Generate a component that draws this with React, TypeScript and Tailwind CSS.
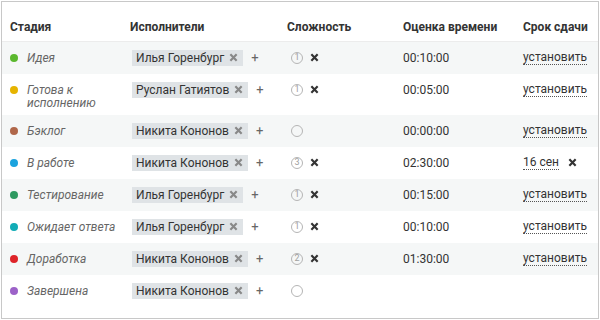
import React from "react";

type Task = {
  stage: string;
  color: string;
  who: string;
  level: number | null;
  time: string;
  due: string | null;
};

const tasks: Task[] = [
  { stage: "Идея", color: "bg-[#5bb82e]", who: "Илья Горенбург", level: 1, time: "00:10:00", due: null },
  { stage: "Готова к исполнению", color: "bg-[#e6b400]", who: "Руслан Гатиятов", level: 1, time: "00:05:00", due: null },
  { stage: "Бэклог", color: "bg-[#b0674a]", who: "Никита Кононов", level: null, time: "00:00:00", due: null },
  { stage: "В работе", color: "bg-[#1ba3de]", who: "Никита Кононов", level: 3, time: "02:30:00", due: "16 сен" },
  { stage: "Тестирование", color: "bg-[#2e9a61]", who: "Илья Горенбург", level: 1, time: "00:15:00", due: null },
  { stage: "Ожидает ответа", color: "bg-[#12acb6]", who: "Илья Горенбург", level: 1, time: "00:10:00", due: null },
  { stage: "Доработка", color: "bg-[#de2429]", who: "Никита Кононов", level: 2, time: "01:30:00", due: null },
  { stage: "Завершена", color: "bg-[#9c62c8]", who: "Никита Кононов", level: null, time: "", due: "" },
];

function Cross({ size = 9, width = 2.2, className = "" }: { size?: number; width?: number; className?: string }) {
  return (
    <svg width={size} height={size} viewBox="0 0 10 10" className={className}>
      <path d="M1.5 1.5 L8.5 8.5 M8.5 1.5 L1.5 8.5" stroke="currentColor" strokeWidth={width} fill="none" />
    </svg>
  );
}

function Level({ level }: { level: number | null }) {
  return (
    <div className="flex h-4 items-center gap-[7px]">
      <span className="ml-[4px] flex h-[12px] w-[12px] items-center justify-center rounded-full border border-[#b5b5b5] text-[9px] leading-none text-[#a0a0a0]">
        {level ?? ""}
      </span>
      {level !== null && <Cross size={9} width={2.4} className="text-[#333]" />}
    </div>
  );
}

function Due({ due }: { due: string | null }) {
  if (due === "") return null;
  return (
    <div className="flex h-4 items-center gap-[9px]">
      <span className="border-b border-dotted border-[#555] leading-[14px] text-[#333]">
        {due ?? "установить"}
      </span>
      {due && <Cross size={9} width={2.4} className="text-[#333]" />}
    </div>
  );
}

export default function App() {
  return (
    <div className="p-px" style={{ fontFamily: "Roboto, 'Liberation Sans', sans-serif" }}>
      <div className="h-[318px] w-[598px] border border-[#c8c8c8] bg-white">
        <table className="w-full table-fixed border-collapse text-[12px] text-[#333]">
          <colgroup>
            <col className="w-[120px]" />
            <col className="w-[157px]" />
            <col className="w-[116px]" />
            <col className="w-[120px]" />
            <col />
          </colgroup>
          <thead>
            <tr className="border-b border-[#ececec]">
              {["Стадия", "Исполнители", "Сложность", "Оценка времени", "Срок сдачи"].map((h) => (
                <th key={h} className="h-[39px] pl-2 pt-[12px] text-left align-middle font-bold leading-4">
                  {h}
                </th>
              ))}
            </tr>
          </thead>
          <tbody>
            {tasks.map((t, i) => (
              <tr key={t.stage} className={i % 2 === 0 ? "bg-[#f5f7f7]" : "bg-white"}>
                <td className="py-2 pl-2 align-top">
                  <div className="flex gap-[9px]">
                    <span className={`mt-[4px] h-[8px] w-[8px] shrink-0 rounded-full ${t.color}`} />
                    <span className="-mb-[3px] pt-[2px] italic leading-[13px] text-[#666]">{t.stage}</span>
                  </div>
                </td>
                <td className="py-2 pl-2 align-top">
                  <div className="flex items-center gap-[8px]">
                    <span className="ml-[2px] flex h-4 items-center gap-[5px] bg-[#dfe3e6] pl-[4px] pr-[5px] leading-4">
                      {t.who}
                      <Cross size={9} width={2.4} className="text-[#888]" />
                    </span>
                    <span className="text-[13px] leading-4 text-[#666]">+</span>
                  </div>
                </td>
                <td className="py-2 pl-2 align-top">
                  <Level level={t.level} />
                </td>
                <td className="py-2 pl-2 align-top leading-4">{t.time}</td>
                <td className="py-2 pl-2 align-top">
                  <Due due={t.due} />
                </td>
              </tr>
            ))}
          </tbody>
        </table>
      </div>
    </div>
  );
}
